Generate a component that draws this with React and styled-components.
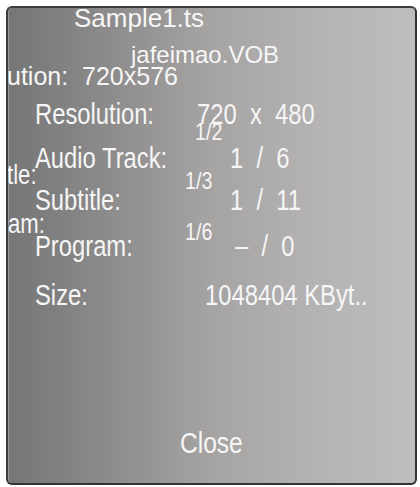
import React from "react";
import styled, { createGlobalStyle, css } from "styled-components";

const GlobalStyle = createGlobalStyle`
  html, body { margin: 0; padding: 0; background: #ffffff; }
  #root { width: 420px; height: 487px; overflow: hidden; }
`;

const condensed = css`
  display: inline-block;
  transform: scaleX(0.82);
  transform-origin: left center;
`;

const Page = styled.div`
  box-sizing: border-box;
  width: 420px;
  height: 487px;
  padding: 6px 3px 0 6px;
`;

const Panel = styled.div`
  position: relative;
  box-sizing: border-box;
  height: 479px;
  border: 2px solid #3c3c3c;
  border-right-color: #333333;
  border-bottom-color: #333333;
  border-radius: 6px;
  overflow: hidden;
  background: linear-gradient(to right, #767676 0%, #8d8b8b 25%, #a6a3a3 50%, #b4b2b2 75%, #bebebe 100%);
  box-shadow: inset 1px 0 0 rgba(255, 255, 255, 0.25);
  color: #f6f6f6;
  font-family: "Liberation Sans", Arial, sans-serif;
`;

const Content = styled.div`
  box-sizing: border-box;
  height: 100%;
  display: flex;
  flex-direction: column;
  padding: 92px 0 25px 27px;
  font-size: 29px;
  line-height: 29px;
`;

const InfoGrid = styled.div`
  display: grid;
  grid-template-columns: 162px 1fr;
  grid-template-rows: 44px 42px 46px 49px 29px;
`;

const Label = styled.div`
  white-space: pre;
`;

const Value = styled.div`
  white-space: pre;
  padding-left: ${(p) => p.$indent}px;
`;

const Narrow = styled.span`
  ${condensed}
`;

const CloseButton = styled.div`
  margin-top: auto;
  margin-left: -27px;
  text-align: center;
  font-size: 30px;
  line-height: 30px;
  cursor: pointer;
`;

const CloseText = styled.span`
  display: inline-block;
  transform: scaleX(0.82);
  transform-origin: center center;
`;

const Ghost = styled.div`
  position: absolute;
  left: ${(p) => p.$x}px;
  top: ${(p) => p.$y}px;
  font-size: ${(p) => p.$size}px;
  line-height: 1;
  white-space: pre;
  color: #f6f6f6;
  transform-origin: left center;
  ${(p) => p.$narrow && "transform: scaleX(0.82);"}
`;

const rows = [
  { label: "Resolution:", value: "720  x  480", indent: 0 },
  { label: "Audio Track:", value: "1  /  6", indent: 33 },
  { label: "Subtitle:", value: "1  /  11", indent: 33 },
  { label: "Program:", value: "\u2013  /  0", indent: 38 },
  { label: "Size:", value: "1048404 KByt..", indent: 8 },
];

const ghosts = [
  { text: "Sample1.ts", x: 66, y: -3, size: 26 },
  { text: "jafeimao.VOB", x: 123, y: 35, size: 24 },
  { text: "ution:  720x576", x: -1, y: 56, size: 25 },
  { text: "tle:", x: -1, y: 154, size: 27, narrow: true },
  { text: "am:", x: 0, y: 203, size: 27, narrow: true },
  { text: "1/2", x: 187, y: 112, size: 24, narrow: true },
  { text: "1/3", x: 177, y: 161, size: 24, narrow: true },
  { text: "1/6", x: 177, y: 212, size: 24, narrow: true },
];

export default function App() {
  return (
    <>
      <GlobalStyle />
      <Page>
        <Panel>
          {ghosts.map((g) => (
            <Ghost key={g.text} $x={g.x} $y={g.y} $size={g.size} $narrow={g.narrow}>
              {g.text}
            </Ghost>
          ))}
          <Content>
            <InfoGrid>
              {rows.map((r) => (
                <React.Fragment key={r.label}>
                  <Label>
                    <Narrow>{r.label}</Narrow>
                  </Label>
                  <Value $indent={r.indent}>
                    <Narrow>{r.value}</Narrow>
                  </Value>
                </React.Fragment>
              ))}
            </InfoGrid>
            <CloseButton>
              <CloseText>Close</CloseText>
            </CloseButton>
          </Content>
        </Panel>
      </Page>
    </>
  );
}
